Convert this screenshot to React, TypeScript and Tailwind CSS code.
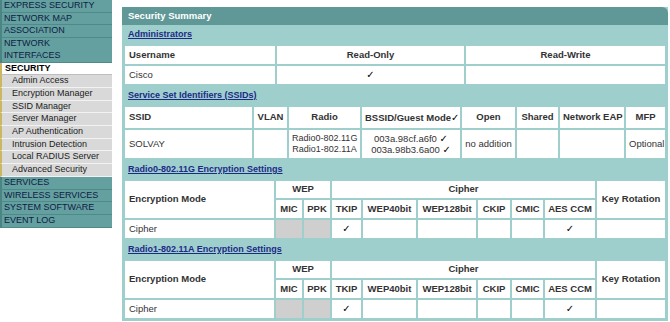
import { ReactNode } from 'react';

const font = { fontFamily: '"Liberation Sans", Arial, sans-serif' };

const topItems = ['EXPRESS SECURITY', 'NETWORK MAP', 'ASSOCIATION'];
const subItems = [
  'Admin Access',
  'Encryption Manager',
  'SSID Manager',
  'Server Manager',
  'AP Authentication',
  'Intrusion Detection',
  'Local RADIUS Server',
  'Advanced Security',
];
const bottomItems = ['SERVICES', 'WIRELESS SERVICES', 'SYSTEM SOFTWARE', 'EVENT LOG'];

function NavItem({ children }: { children: ReactNode }) {
  return (
    <div className="bg-[#63a09f] border-b border-[#4f8a89] border-l-2 border-l-[#4a8584] pl-[2px] text-[#0f1c44] text-[9px] leading-[11.7px]">
      {children}
    </div>
  );
}

function Sidebar() {
  return (
    <div className="w-[112px] shrink-0">
      {topItems.map((t) => (
        <NavItem key={t}>{t}</NavItem>
      ))}
      <NavItem>
        NETWORK
        <br />
        INTERFACES
      </NavItem>
      <div className="bg-white border-l-2 border-l-[#cbb760] pl-[3px] font-bold text-black text-[9px] leading-[11.7px] border-b border-[#bdbdbd]">
        SECURITY
      </div>
      {subItems.map((t) => (
        <div
          key={t}
          className="bg-[#d9d9d9] border-l-2 border-l-[#cbb760] border-b border-[#f2f2f2] pl-[10px] text-[#1b1b1b] text-[9px] leading-[11.7px]"
        >
          {t}
        </div>
      ))}
      {bottomItems.map((t) => (
        <NavItem key={t}>{t}</NavItem>
      ))}
    </div>
  );
}

function Check() {
  return <span style={{ fontFamily: '"DejaVu Sans", sans-serif' }} className="text-[10px] text-black">✓</span>;
}

function Section({ title }: { title: string }) {
  return (
    <div className="h-[19px] flex items-center pl-[5px]">
      <span className="text-[#1c2a86] font-bold underline text-[9px]">{title}</span>
    </div>
  );
}

const tbl = 'w-full table-fixed border-separate border-spacing-[2px] text-[9.5px]';
const th = 'bg-white font-bold text-[#333] text-center px-[3px] whitespace-nowrap';
const td = 'bg-white text-[#333] text-center px-[3px] whitespace-nowrap';
const gray = 'bg-[#cfcfcf]';

function EncTable() {
  return (
    <table className={tbl}>
      <colgroup>
        <col className="w-[149px]" />
        <col className="w-[26px]" />
        <col className="w-[26px]" />
        <col className="w-[29px]" />
        <col className="w-[53px]" />
        <col className="w-[58px]" />
        <col className="w-[32px]" />
        <col className="w-[31px]" />
        <col className="w-[50px]" />
        <col />
      </colgroup>
      <tbody>
        <tr className="h-[17px]">
          <td rowSpan={2} className={`${th} text-left pl-[4px]`}>
            Encryption Mode
          </td>
          <td colSpan={2} className={th}>
            WEP
          </td>
          <td colSpan={6} className={th}>
            Cipher
          </td>
          <td rowSpan={2} className={th}>
            Key Rotation
          </td>
        </tr>
        <tr className="h-[18px]">
          {['MIC', 'PPK', 'TKIP', 'WEP40bit', 'WEP128bit', 'CKIP', 'CMIC', 'AES CCM'].map((c) => (
            <td key={c} className={th}>
              {c}
            </td>
          ))}
        </tr>
        <tr className="h-[18px]">
          <td className={`${td} text-left pl-[4px]`}>Cipher</td>
          <td className={gray}></td>
          <td className={gray}></td>
          <td className={td}>
            <Check />
          </td>
          <td className={td}></td>
          <td className={td}></td>
          <td className={td}></td>
          <td className={td}></td>
          <td className={td}>
            <Check />
          </td>
          <td className={td}></td>
        </tr>
      </tbody>
    </table>
  );
}

export default function App() {
  return (
    <div style={font} className="flex w-[670px] h-[322px] bg-white overflow-hidden">
      <Sidebar />
      <div className="ml-[10px] mt-[7px] w-[546px] self-start bg-[#9ecfcc] pb-[1px] px-[1px]">
        <div className="-mx-[1px] h-[18px] bg-[#5f9897] rounded-tr-[6px] flex items-center pl-[6px]">
          <span className="text-white font-bold text-[9.5px]">Security Summary</span>
        </div>

        <Section title="Administrators" />
        <table className={tbl}>
          <colgroup>
            <col className="w-[150px]" />
            <col className="w-[187px]" />
            <col />
          </colgroup>
          <tbody>
            <tr className="h-[18px]">
              <td className={`${th} text-left pl-[4px]`}>Username</td>
              <td className={th}>Read-Only</td>
              <td className={th}>Read-Write</td>
            </tr>
            <tr className="h-[18px]">
              <td className={`${td} text-left pl-[4px]`}>Cisco</td>
              <td className={td}>
                <Check />
              </td>
              <td className={td}></td>
            </tr>
          </tbody>
        </table>

        <Section title="Service Set Identifiers (SSIDs)" />
        <table className={tbl}>
          <colgroup>
            <col className="w-[127px]" />
            <col className="w-[33px]" />
            <col className="w-[71px]" />
            <col className="w-[98px]" />
            <col className="w-[53px]" />
            <col className="w-[41px]" />
            <col className="w-[64px]" />
            <col />
          </colgroup>
          <tbody>
            <tr className="h-[21px]">
              <td className={`${th} text-left pl-[4px]`}>SSID</td>
              <td className={th}>VLAN</td>
              <td className={th}>Radio</td>
              <td className={`${th} px-0`}>
                BSSID/Guest Mode
                <Check />
              </td>
              <td className={th}>Open</td>
              <td className={th}>Shared</td>
              <td className={th}>Network EAP</td>
              <td className={th}>MFP</td>
            </tr>
            <tr className="h-[28px]">
              <td className={`${td} text-left pl-[4px]`}>SOLVAY</td>
              <td className={td}></td>
              <td className={`${td} px-0 text-[9px] leading-[11px]`}>
                Radio0-802.11G
                <br />
                Radio1-802.11A
              </td>
              <td className={`${td} leading-[11px]`}>
                003a.98cf.a6f0 <Check />
                <br />
                003a.98b3.6a00 <Check />
              </td>
              <td className={td}>no addition</td>
              <td className={td}></td>
              <td className={td}></td>
              <td className={td}>Optional</td>
            </tr>
          </tbody>
        </table>

        <Section title="Radio0-802.11G Encryption Settings" />
        <EncTable />

        <Section title="Radio1-802.11A Encryption Settings" />
        <EncTable />
      </div>
    </div>
  );
}
